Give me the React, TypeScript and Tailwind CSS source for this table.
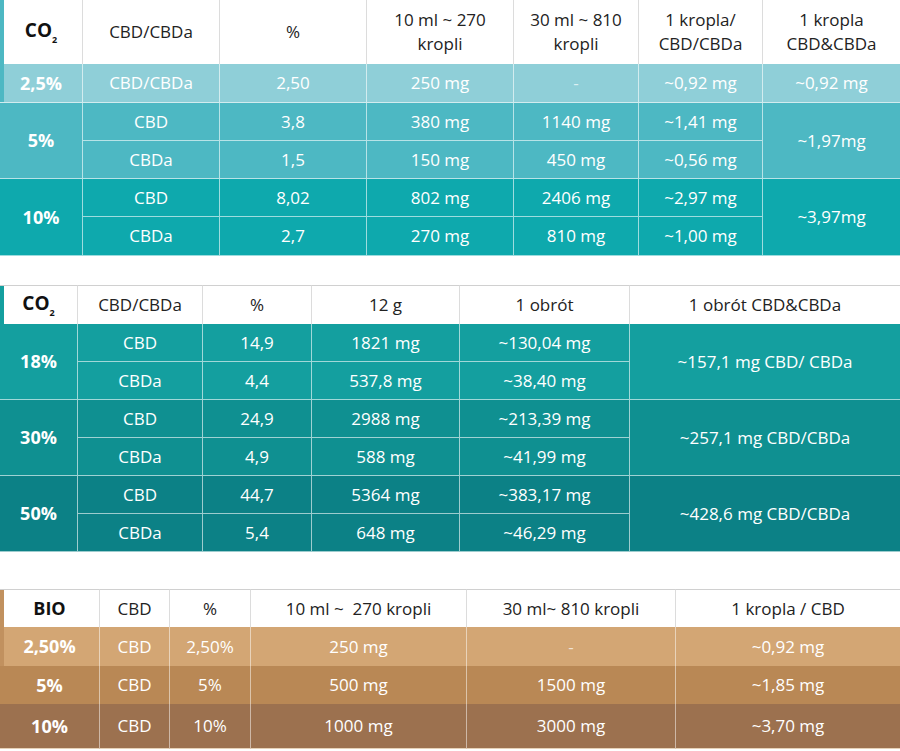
import React from "react";

const hd = "bg-white text-[#222] text-[17px] leading-6 text-center align-middle font-normal border-r border-[#dcdcdc] p-0";
const bd = "text-white text-[17px] text-center align-middle border-r border-b border-white/60 p-0";
const lb = "text-white text-[18px] font-bold text-center align-middle border-r border-b border-white/60 p-0";

function CO2() {
  return (
    <span className="font-bold text-[#111] text-[19px]">
      CO<span className="text-[9px] relative top-[6px]">2</span>
    </span>
  );
}

export default function App() {
  return (
    <div className="w-[900px] h-[751px] bg-white font-['Open_Sans',sans-serif] overflow-hidden">
      {/* Table 1 */}
      <table className="w-[900px] table-fixed border-separate border-spacing-0">
        <colgroup>
          <col className="w-[83px]" />
          <col className="w-[137px]" />
          <col className="w-[147px]" />
          <col className="w-[147px]" />
          <col className="w-[125px]" />
          <col className="w-[124px]" />
          <col className="w-[137px]" />
        </colgroup>
        <thead>
          <tr className="h-[64px]">
            <th className={hd + " shadow-[inset_4px_0_0_#4db8c3]"}><CO2 /></th>
            <th className={hd}>CBD/CBDa</th>
            <th className={hd}>%</th>
            <th className={hd}>10 ml ~ 270<br />kropli</th>
            <th className={hd}>30 ml ~ 810<br />kropli</th>
            <th className={hd}>1 kropla/<br />CBD/CBDa</th>
            <th className={hd + " border-r-0"}>1 kropla<br />CBD&amp;CBDa</th>
          </tr>
        </thead>
        <tbody>
          <tr className="h-[39px] bg-[#8fcfd8]">
            <td className={lb + " shadow-[inset_4px_0_0_#4db8c3]"}>2,5%</td>
            <td className={bd}>CBD/CBDa</td>
            <td className={bd}>2,50</td>
            <td className={bd}>250 mg</td>
            <td className={bd + " text-white/70"}>-</td>
            <td className={bd}>~0,92 mg</td>
            <td className={bd + " border-r-0"}>~0,92 mg</td>
          </tr>
          <tr className="h-[38px] bg-[#4db8c3]">
            <td rowSpan={2} className={lb}>5%</td>
            <td className={bd}>CBD</td>
            <td className={bd}>3,8</td>
            <td className={bd}>380 mg</td>
            <td className={bd}>1140 mg</td>
            <td className={bd}>~1,41 mg</td>
            <td rowSpan={2} className={bd + " border-r-0"}>~1,97mg</td>
          </tr>
          <tr className="h-[38px] bg-[#4db8c3]">
            <td className={bd}>CBDa</td>
            <td className={bd}>1,5</td>
            <td className={bd}>150 mg</td>
            <td className={bd}>450 mg</td>
            <td className={bd}>~0,56 mg</td>
          </tr>
          <tr className="h-[38px] bg-[#0ea9ad]">
            <td rowSpan={2} className={lb}>10%</td>
            <td className={bd}>CBD</td>
            <td className={bd}>8,02</td>
            <td className={bd}>802 mg</td>
            <td className={bd}>2406 mg</td>
            <td className={bd}>~2,97 mg</td>
            <td rowSpan={2} className={bd + " border-r-0"}>~3,97mg</td>
          </tr>
          <tr className="h-[39px] bg-[#0ea9ad]">
            <td className={bd}>CBDa</td>
            <td className={bd}>2,7</td>
            <td className={bd}>270 mg</td>
            <td className={bd}>810 mg</td>
            <td className={bd}>~1,00 mg</td>
          </tr>
        </tbody>
      </table>

      <div className="h-[29px]" />

      {/* Table 2 */}
      <table className="w-[900px] table-fixed border-separate border-spacing-0">
        <colgroup>
          <col className="w-[78px]" />
          <col className="w-[125px]" />
          <col className="w-[109px]" />
          <col className="w-[148px]" />
          <col className="w-[170px]" />
          <col className="w-[270px]" />
        </colgroup>
        <thead>
          <tr className="h-[39px]">
            <th className={hd + " border-t border-t-[#d0d0d0] shadow-[inset_4px_0_0_#149f9f]"}><CO2 /></th>
            <th className={hd + " border-t border-t-[#d0d0d0]"}>CBD/CBDa</th>
            <th className={hd + " border-t border-t-[#d0d0d0]"}>%</th>
            <th className={hd + " border-t border-t-[#d0d0d0]"}>12 g</th>
            <th className={hd + " border-t border-t-[#d0d0d0]"}>1 obrót</th>
            <th className={hd + " border-t border-t-[#d0d0d0] border-r-0"}>1 obrót CBD&amp;CBDa</th>
          </tr>
        </thead>
        <tbody>
          <tr className="h-[38px] bg-[#149f9f]">
            <td rowSpan={2} className={lb}>18%</td>
            <td className={bd}>CBD</td>
            <td className={bd}>14,9</td>
            <td className={bd}>1821 mg</td>
            <td className={bd}>~130,04 mg</td>
            <td rowSpan={2} className={bd + " border-r-0"}>~157,1 mg CBD/ CBDa</td>
          </tr>
          <tr className="h-[38px] bg-[#149f9f]">
            <td className={bd}>CBDa</td>
            <td className={bd}>4,4</td>
            <td className={bd}>537,8 mg</td>
            <td className={bd}>~38,40 mg</td>
          </tr>
          <tr className="h-[38px] bg-[#0f9091]">
            <td rowSpan={2} className={lb}>30%</td>
            <td className={bd}>CBD</td>
            <td className={bd}>24,9</td>
            <td className={bd}>2988 mg</td>
            <td className={bd}>~213,39 mg</td>
            <td rowSpan={2} className={bd + " border-r-0"}>~257,1 mg CBD/CBDa</td>
          </tr>
          <tr className="h-[38px] bg-[#0f9091]">
            <td className={bd}>CBDa</td>
            <td className={bd}>4,9</td>
            <td className={bd}>588 mg</td>
            <td className={bd}>~41,99 mg</td>
          </tr>
          <tr className="h-[38px] bg-[#0c8186]">
            <td rowSpan={2} className={lb}>50%</td>
            <td className={bd}>CBD</td>
            <td className={bd}>44,7</td>
            <td className={bd}>5364 mg</td>
            <td className={bd}>~383,17 mg</td>
            <td rowSpan={2} className={bd + " border-r-0"}>~428,6 mg CBD/CBDa</td>
          </tr>
          <tr className="h-[38px] bg-[#0c8186]">
            <td className={bd}>CBDa</td>
            <td className={bd}>5,4</td>
            <td className={bd}>648 mg</td>
            <td className={bd}>~46,29 mg</td>
          </tr>
        </tbody>
      </table>

      <div className="h-[37px]" />

      {/* Table 3 */}
      <table className="w-[900px] table-fixed border-separate border-spacing-0">
        <colgroup>
          <col className="w-[100px]" />
          <col className="w-[70px]" />
          <col className="w-[81px]" />
          <col className="w-[216px]" />
          <col className="w-[209px]" />
          <col className="w-[224px]" />
        </colgroup>
        <thead>
          <tr className="h-[38px]">
            <th className={hd + " border-t border-t-[#d0d0d0] shadow-[inset_4px_0_0_#c1915f]"}><span className="font-bold text-[#111] text-[18px]">BIO</span></th>
            <th className={hd + " border-t border-t-[#d0d0d0]"}>CBD</th>
            <th className={hd + " border-t border-t-[#d0d0d0]"}>%</th>
            <th className={hd + " border-t border-t-[#d0d0d0]"}>10 ml ~&nbsp; 270 kropli</th>
            <th className={hd + " border-t border-t-[#d0d0d0]"}>30 ml~ 810 kropli</th>
            <th className={hd + " border-t border-t-[#d0d0d0] border-r-0"}>1 kropla / CBD</th>
          </tr>
        </thead>
        <tbody>
          <tr className="h-[39px] bg-[#d3a674]">
            <td className="text-white text-[18px] font-bold text-center align-middle border-r border-white/50 p-0 shadow-[inset_4px_0_0_#c1915f]">2,50%</td>
            <td className="text-white text-[17px] text-center align-middle border-r border-white/50 p-0">CBD</td>
            <td className="text-white text-[17px] text-center align-middle border-r border-white/50 p-0">2,50%</td>
            <td className="text-white text-[17px] text-center align-middle border-r border-white/50 p-0">250 mg</td>
            <td className="text-white/70 text-[17px] text-center align-middle border-r border-white/50 p-0">-</td>
            <td className="text-white text-[17px] text-center align-middle p-0">~0,92 mg</td>
          </tr>
          <tr className="h-[38px] bg-[#b98855]">
            <td className="text-white text-[18px] font-bold text-center align-middle border-r border-white/50 p-0">5%</td>
            <td className="text-white text-[17px] text-center align-middle border-r border-white/50 p-0">CBD</td>
            <td className="text-white text-[17px] text-center align-middle border-r border-white/50 p-0">5%</td>
            <td className="text-white text-[17px] text-center align-middle border-r border-white/50 p-0">500 mg</td>
            <td className="text-white text-[17px] text-center align-middle border-r border-white/50 p-0">1500 mg</td>
            <td className="text-white text-[17px] text-center align-middle p-0">~1,85 mg</td>
          </tr>
          <tr className="h-[45px] bg-[#9c714f]">
            <td className="text-white text-[18px] font-bold text-center align-middle border-r border-b border-white/50 border-b-[#e6d2b8] p-0">10%</td>
            <td className="text-white text-[17px] text-center align-middle border-r border-b border-white/50 border-b-[#e6d2b8] p-0">CBD</td>
            <td className="text-white text-[17px] text-center align-middle border-r border-b border-white/50 border-b-[#e6d2b8] p-0">10%</td>
            <td className="text-white text-[17px] text-center align-middle border-r border-b border-white/50 border-b-[#e6d2b8] p-0">1000 mg</td>
            <td className="text-white text-[17px] text-center align-middle border-r border-b border-white/50 border-b-[#e6d2b8] p-0">3000 mg</td>
            <td className="text-white text-[17px] text-center align-middle border-b border-b-[#e6d2b8] p-0">~3,70 mg</td>
          </tr>
        </tbody>
      </table>
    </div>
  );
}
